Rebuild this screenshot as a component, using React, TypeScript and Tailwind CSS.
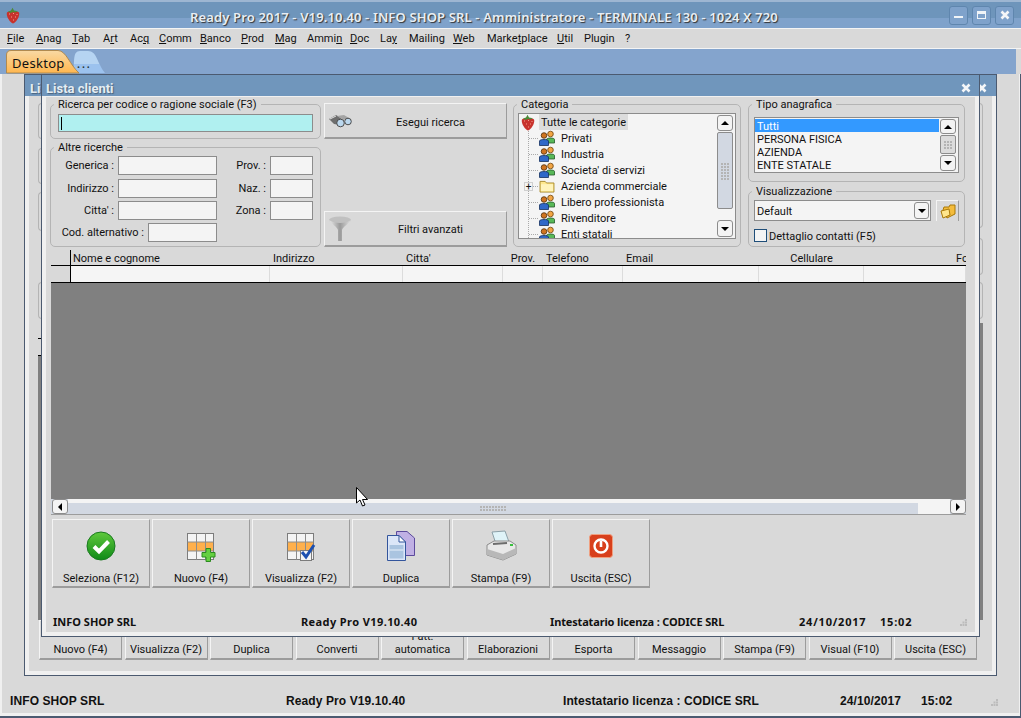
import React from "react";

const Strawberry = ({ className }: { className: string }) => (
  <svg viewBox="0 0 14 17" className={className}>
    <path d="M1 5.500C3 3.500 11 3.500 13 5.500C14.200 9 10.500 15 7 16.600C3.500 15 -.2 9 1 5.500Z" fill="#c8322c" />
    <path d="M3 7h1M7 6.500h1M10.500 7.500h1M5 10h1M9 10h1M7 13h1" stroke="#f2a08c" strokeWidth="1" />
    <path d="M2 4.500L5 3.600L6.500 .8L8 3.400L12 4.200L9 5.600L7 5L4.500 6Z" fill="#4c8a38" />
  </svg>
);

const People = () => (
  <svg viewBox="0 0 16 16" className="h-4 w-4 shrink-0">
    <path d="M7.500 13V9.500C7.500 7.500 15.500 7.500 15.500 9.500V13Z" fill="#58b858" stroke="#23582a" strokeWidth=".8" />
    <circle cx="11.5" cy="4" r="2.8" fill="#f2a544" stroke="#6e4208" strokeWidth=".8" />
    <path d="M.5 15.500V11C.5 9 9.500 9 9.500 11V15.500Z" fill="#2f68c8" stroke="#14305f" strokeWidth=".8" />
    <circle cx="5" cy="5.5" r="2.8" fill="#d07420" stroke="#50300a" strokeWidth=".8" />
  </svg>
);

const FolderIcon = () => (
  <svg viewBox="0 0 16 14" className="h-[13px] w-4 shrink-0">
    <path d="M.5 13V1.500H6L7.500 3.200H15.500V13Z" fill="#ffe98f" stroke="#a8892c" />
    <path d="M1.500 12V4.500H14.500V12Z" fill="#fff4bc" />
  </svg>
);

const Arrow = ({ up = false, left = false, right = false }: { up?: boolean; left?: boolean; right?: boolean }) => (
  <svg viewBox="0 0 8 8" className="h-2 w-2">
    {up && <path d="M0 6H8L4 2Z" fill="#000" />}
    {left && <path d="M6 0V8L2 4Z" fill="#000" />}
    {right && <path d="M2 0V8L6 4Z" fill="#000" />}
    {!up && !left && !right && <path d="M0 2H8L4 6Z" fill="#000" />}
  </svg>
);

const ScrollButton = ({ children, className }: { children: React.ReactNode; className: string }) => (
  <div className={`flex shrink-0 items-center justify-center rounded-[3px] border border-[#8c8c8c] bg-[#f4f4f4] ${className}`}>
    {children}
  </div>
);

const Grip = ({ dots = 9 }: { dots?: number }) => (
  <div className="grid grid-cols-3 gap-px">
    {Array.from({ length: dots }).map((_, i) => (
      <div key={i} className="h-[2px] w-[2px] bg-[#b4b4b4]" />
    ))}
  </div>
);

const ResizeGrip = () => (
  <svg viewBox="0 0 7 7" className="mb-[2px] h-[7px] w-[7px]">
    <path d="M5 0h2v2H5ZM2.500 2.500h2v2h-2ZM5 2.500h2v2H5ZM0 5h2v2H0ZM2.500 5h2v2h-2ZM5 5h2v2H5Z" fill="#bcbcbc" />
  </svg>
);

const GridBase = ({ children }: { children: React.ReactNode }) => (
  <svg viewBox="0 0 32 32" className="h-8 w-8">
    <rect x="2.5" y="3.5" width="26" height="26" fill="#f4f4f4" stroke="#7c7c7c" />
    <rect x="3" y="12" width="25" height="9" fill="#ffb04c" />
    <path d="M11.500 3.500V29.500M20.500 3.500V29.500M2.500 12H28.500M2.500 21H28.500" stroke="#8c8c8c" />
    {children}
  </svg>
);

const icons: Record<string, React.ReactNode> = {
  check: (
    <svg viewBox="0 0 30 30" className="h-[30px] w-[30px]">
      <defs>
        <linearGradient id="g" x1="0" y1="0" x2="0" y2="1">
          <stop offset="0" stopColor="#5fc93c" />
          <stop offset="1" stopColor="#0f8a18" />
        </linearGradient>
      </defs>
      <circle cx="15" cy="15" r="14" fill="url(#g)" stroke="#1a7a20" />
      <path d="M8 15.500L13 20.500L22.500 10.500" fill="none" stroke="#fff" strokeWidth="4" />
    </svg>
  ),
  nuovo: (
    <GridBase>
      <path d="M21 18.500H25.500V22.500H30V27H25.500V31.500H21V27H17V22.500H21Z" fill="#64d040" stroke="#2c8a20" />
    </GridBase>
  ),
  visualizza: (
    <GridBase>
      <rect x="15.5" y="20.5" width="11" height="10" fill="#f4f4f4" stroke="#7c7c7c" />
      <path d="M17 22L21 27L29 15" fill="none" stroke="#1c50b0" strokeWidth="3" />
    </GridBase>
  ),
  duplica: (
    <svg viewBox="0 0 30 32" className="h-8 w-[30px]">
      <path d="M10.500 1.500H21L28.500 8V25.500H10.500Z" fill="#c0b0e4" stroke="#5c4a9c" />
      <path d="M1.500 5.500H13L19.500 12V30.500H1.500Z" fill="#dbe6f8" stroke="#33559c" />
      <path d="M3.500 15H17.500V28.500H3.500Z" fill="#aac4e0" />
      <path d="M3.500 20H17.500" stroke="#e8f0fa" />
      <path d="M13 5.500V12H19.500Z" fill="#fff" stroke="#33559c" />
    </svg>
  ),
  stampa: (
    <svg viewBox="0 0 32 32" className="h-8 w-8">
      <path d="M7 2L20 1L24 12L11 14Z" fill="#dff3f8" stroke="#8ca0a8" />
      <path d="M2 15L9 11H25L31 15V24L18 30L2 25Z" fill="#e8e8e8" stroke="#8c8c8c" />
      <path d="M2 19L18 24L31 18V24L18 30L2 25Z" fill="#b8b8b8" />
      <rect x="25" y="14" width="3" height="2" fill="#3cc040" />
      <path d="M8 14L22 13" stroke="#6c6c6c" strokeWidth="2" />
    </svg>
  ),
  uscita: (
    <svg viewBox="0 0 24 24" className="h-6 w-6">
      <rect x=".5" y=".5" width="23" height="23" rx="3" fill="#d8401c" stroke="#f0a080" />
      <circle cx="12" cy="12" r="6.5" fill="none" stroke="#fff" strokeWidth="2.4" />
      <path d="M12 7V13" stroke="#fff" strokeWidth="2.6" />
    </svg>
  ),
};

const Close = ({ className = "" }: { className?: string }) => (
  <svg viewBox="0 0 10 10" className={`h-[10px] w-[10px] ${className}`}>
    <path d="M1.500 1.500L8.500 8.500M8.500 1.500L1.500 8.500" stroke="#f4f6f8" strokeWidth="2.6" />
  </svg>
);

const Group = ({ title, className, bodyClass = "", children }: { title: string; className: string; bodyClass?: string; children?: React.ReactNode }) => (
  <fieldset className={`rounded-[5px] border border-[#b4b4b4] ${className}`}>
    <legend className="ml-[3px] box-border h-[14px] px-[4px] pt-px leading-[14px]">{title}</legend>
    <div className={bodyClass}>{children}</div>
  </fieldset>
);

const Field = ({ className }: { className: string }) => (
  <div className={`h-[19px] shrink-0 border border-[#8c8c8c] bg-[#f4f4f4] ${className}`} />
);

const Underlined = ({ text, at }: { text: string; at: number }) => (
  <span>
    {text.slice(0, at)}
    <span className="underline">{text.slice(at, at + 1)}</span>
    {text.slice(at + 1)}
  </span>
);

const menu: [string, number, string][] = [
  ["File", 0, "w-[29px]"],
  ["Anag", 0, "w-[36px]"],
  ["Tab", 0, "w-[31px]"],
  ["Art", 1, "w-[27px]"],
  ["Acq", 2, "w-[29px]"],
  ["Comm", 0, "w-[41px]"],
  ["Banco", 0, "w-[41px]"],
  ["Prod", 0, "w-[34px]"],
  ["Mag", 0, "w-[32px]"],
  ["Ammin", 4, "w-[43px]"],
  ["Doc", 0, "w-[30px]"],
  ["Lay", 2, "w-[29px]"],
  ["Mailing", 9, "w-[44px]"],
  ["Web", 0, "w-[34px]"],
  ["Marketplace", 5, "w-[70px]"],
  ["Util", 0, "w-[27px]"],
  ["Plugin", 9, "w-[41px]"],
  ["?", 9, "w-[10px]"],
];

const tree = ["Privati", "Industria", "Societa' di servizi", "Azienda commerciale", "Libero professionista", "Rivenditore", "Enti statali"];

const columns = [
  { name: "Nome e cognome", cls: "w-[199px] pl-[2px]" },
  { name: "Indirizzo", cls: "w-[133px] pl-[3px]" },
  { name: "Citta'", cls: "w-[100px] pl-[3px]" },
  { name: "Prov.", cls: "w-[40px] text-center" },
  { name: "Telefono", cls: "w-[80px] pl-[3px]" },
  { name: "Email", cls: "w-[136px] pl-[3px]" },
  { name: "Cellulare", cls: "w-[105px] text-center" },
  { name: "Fornitore", cls: "w-[102px] pl-[92px]" },
];

const actions = [
  { label: "Seleziona (F12)", icon: "check" },
  { label: "Nuovo (F4)", icon: "nuovo" },
  { label: "Visualizza (F2)", icon: "visualizza" },
  { label: "Duplica", icon: "duplica" },
  { label: "Stampa (F9)", icon: "stampa" },
  { label: "Uscita (ESC)", icon: "uscita" },
];

const backButtons = ["Nuovo (F4)", "Visualizza (F2)", "Duplica", "Converti", "Fatt.\nautomatica", "Elaborazioni", "Esporta", "Messaggio", "Stampa (F9)", "Visual (F10)", "Uscita (ESC)"];

const raised = "border-t border-l border-t-[#f4f4f4] border-l-[#f4f4f4] border-b-2 border-r border-b-[#9c9c9c] border-r-[#9c9c9c]";

const TitleBar = ({ children }: { children: React.ReactNode }) => (
  <div className="flex h-[21px] shrink-0 items-center bg-[#7096bc] pt-[5px] text-[13px] font-bold text-[#e4edf3] [text-shadow:1px_1px_1px_#47627e]">
    {children}
  </div>
);

export default function App() {
  return (
    <div className="relative flex h-[718px] w-[1021px] flex-col overflow-hidden bg-[#d9d9d9] font-['Roboto',sans-serif] text-[11px] leading-[13px] text-[#111]">
      {/* main title */}
      <div className="flex h-[28px] shrink-0 items-center border-t-2 border-[#9db6d2] bg-gradient-to-b from-[#6e95bb] from-60% to-[#7fa2cb] to-60%">
        <Strawberry className="ml-[6px] h-[17px] w-[14px]" />
        <div className="ml-[170px] pt-[5px] font-['Noto_Sans',sans-serif] text-[13px] font-semibold tracking-[0.15px] whitespace-nowrap text-[#e8eef4] [text-shadow:1px_1px_1px_#333]">
          Ready Pro 2017 - V19.10.40 - INFO SHOP SRL - Amministratore - TERMINALE 130 - 1024 X 720
        </div>
        <div className="ml-auto mr-[7px] flex gap-[4px]">
          {["min", "max", "close"].map((b) => (
            <div key={b} className="flex h-[19px] w-[19px] items-center justify-center rounded-[3px] border border-[#5f86ae] bg-[#7fa2cb]">
              {b === "min" && <div className="mt-[4px] h-[2px] w-[9px] bg-[#f0f4f8]" />}
              {b === "max" && <div className="h-[8px] w-[9px] border border-t-[3px] border-[#f0f4f8]" />}
              {b === "close" && <Close />}
            </div>
          ))}
        </div>
      </div>

      {/* menu */}
      <div className="flex h-[21px] shrink-0 items-center border-y border-[#f4f4f4] pl-[7px]">
        {menu.map(([name, at, w]) => (
          <div key={name} className={w}>
            <Underlined text={name} at={at} />
          </div>
        ))}
      </div>

      {/* tabs */}
      <div className="relative mr-[5px] h-[25px] shrink-0 bg-[#84a4cd]">
        <svg viewBox="0 0 110 25" className="absolute left-0 top-0 h-[25px] w-[110px]">
          <defs>
            <linearGradient id="o" x1="0" y1="0" x2="0" y2="1">
              <stop offset="0" stopColor="#f9d9a4" />
              <stop offset="1" stopColor="#ffb74f" />
            </linearGradient>
            <linearGradient id="b" x1="0" y1="0" x2="0" y2="1">
              <stop offset="0" stopColor="#b6d4f2" />
              <stop offset=".6" stopColor="#b6d4f2" />
              <stop offset=".61" stopColor="#9cc2ee" />
              <stop offset="1" stopColor="#9cc2ee" />
            </linearGradient>
          </defs>
          <path d="M73 24C75 14 72 2 80 2H88C97 2 97 14 105 24Z" fill="url(#b)" />
          <path d="M6.500 24V6C6.500 3 8 1.500 11 1.500H58C66 1.500 70 16 79 24Z" fill="url(#o)" stroke="#b08a50" />
        </svg>
        <div className="relative flex h-full items-center pl-[12px] pt-[3px] font-['Noto_Sans',sans-serif] text-[13px] tracking-[0.3px] text-[#111]">
          <span>Desktop</span>
          <span className="ml-[12px] tracking-[1.5px] text-[#233]">...</span>
        </div>
      </div>

      {/* desktop */}
      <div className="relative min-h-0 flex-1 border-x-2 border-[#f0f0f0]">
        {/* back window */}
        <div className="absolute left-[22px] top-0 flex h-[602px] w-[973px] flex-col border border-[#4b5a70] bg-[#d9d9d9]">
          <TitleBar>
            <span className="pl-[5px]">Lista clienti</span>
            <Close className="ml-auto mr-[9px]" />
          </TitleBar>
          <div className="flex min-h-0 flex-1 flex-col border-x-4 border-b-4 border-[#f0f0f0] pl-[9px] pr-[9px]">
            <div className="flex min-h-0 flex-1 justify-between overflow-hidden pt-[7px]">
              <div className="flex w-[4px] flex-col">
                <div className="h-[36px] shrink-0 rounded-l-[5px] border-y border-l border-[#b4b4b4]" />
                <div className="mt-[9px] h-[36px] shrink-0 rounded-l-[5px] border-y border-l border-[#b4b4b4]" />
                <div className="mt-[8px] h-[39px] shrink-0 rounded-l-[5px] border-y border-l border-[#b4b4b4]" />
                <div className="mt-[51px] h-[37px] shrink-0 rounded-l-[5px] border-y border-l border-[#b4b4b4]" />
                <div className="mt-[19px] h-[1px] shrink-0 bg-black" />
                <div className="mt-[16px] min-h-0 flex-1 border-t border-black bg-[#808080]" />
              </div>
              <div className="flex w-[4px] flex-col">
                <div className="h-[125px] shrink-0 rounded-r-[5px] border-y border-r border-[#b4b4b4]" />
                <div className="mt-[10px] h-[37px] shrink-0 rounded-r-[5px] border-y border-r border-[#b4b4b4]" />
                <div className="mt-[7px] h-[37px] shrink-0 rounded-r-[5px] border-y border-r border-[#b4b4b4]" />
                <div className="mt-[4px] min-h-0 flex-1 bg-[#808080]" />
              </div>
            </div>
            <div className="mb-[11px] flex shrink-0 gap-[2.5px] pl-px">
              {backButtons.map((b) => (
                <div key={b} className={`flex h-[40px] w-[83px] shrink-0 items-end justify-center whitespace-pre-line pb-[2px] text-center ${raised}`}>
                  {b}
                </div>
              ))}
            </div>
          </div>
        </div>

        {/* front window */}
        <div className="absolute left-[39px] top-0 flex h-[563px] w-[939px] flex-col border border-[#4b5a70] bg-[#d9d9d9]">
          <TitleBar>
            <span className="pl-[4px]">Lista clienti</span>
            <Close className="ml-auto mr-[8px]" />
          </TitleBar>
          <div className="flex min-h-0 flex-1 flex-col border-x-4 border-b-4 border-t border-[#f0f0f0]">
            {/* filters */}
            <div className="flex h-[153px] shrink-0 pl-[4px]">
              <div className="flex w-[271px] shrink-0 flex-col gap-[1px]">
                <Group title="Ricerca per codice o ragione sociale (F3)" className="h-[42px]" bodyClass="px-[7px]">
                  <div className="mt-[3px] flex h-[18px] items-center border border-[#8c8c8c] bg-[#b0f0f0] pl-[2px]">
                    <div className="h-[13px] w-px bg-black" />
                  </div>
                </Group>
                <Group title="Altre ricerche" className="h-[107px]" bodyClass="flex flex-col pt-[2px]">
                  <div className="flex items-center">
                    <div className="w-[67px] pr-[4px] text-right">Generica :</div>
                    <Field className="w-[99px]" />
                    <div className="w-[53px] pr-[4px] text-right">Prov. :</div>
                    <Field className="w-[43px]" />
                  </div>
                  <div className="mt-[4px] flex items-center">
                    <div className="w-[67px] pr-[4px] text-right">Indirizzo :</div>
                    <Field className="w-[99px]" />
                    <div className="w-[53px] pr-[4px] text-right">Naz. :</div>
                    <Field className="w-[43px]" />
                  </div>
                  <div className="mt-[3px] flex items-center">
                    <div className="w-[67px] pr-[4px] text-right">Citta' :</div>
                    <Field className="w-[99px]" />
                    <div className="w-[53px] pr-[4px] text-right">Zona :</div>
                    <Field className="w-[43px]" />
                  </div>
                  <div className="mt-[3px] flex items-center">
                    <div className="w-[97px] pr-[4px] text-right">Cod. alternativo :</div>
                    <Field className="w-[69px]" />
                  </div>
                </Group>
              </div>

              <div className="ml-[3px] flex h-[150px] w-[183px] shrink-0 flex-col justify-between pt-[6px]">
                <div className={`flex h-[36px] items-center pl-[3px] ${raised}`}>
                  <svg viewBox="0 0 24 14" className="h-[14px] w-[24px]">
                    <path d="M1 5L8 1L13 4L12 11L6 10Z" fill="#6e6e6e" />
                    <path d="M9 2L16 1L21 4L15 6Z" fill="#a4a4a4" />
                    <path d="M2 5L8 2" stroke="#e4e4e4" />
                    <circle cx="12.5" cy="9" r="3.8" fill="#bcd8ee" stroke="#4c4c4c" />
                    <circle cx="20" cy="7.5" r="3.3" fill="#bcd8ee" stroke="#4c4c4c" />
                  </svg>
                  <span className="flex-1 pl-[3px] pt-[4px] text-center">Esegui ricerca</span>
                </div>
                <div className={`flex h-[36px] items-center pl-[3px] ${raised}`}>
                  <svg viewBox="0 0 24 26" className="h-[26px] w-[24px]">
                    <defs>
                      <linearGradient id="f" x1="0" y1="0" x2="1" y2="0">
                        <stop offset="0" stopColor="#ececec" />
                        <stop offset=".5" stopColor="#9a9a9a" />
                        <stop offset="1" stopColor="#e0e0e0" />
                      </linearGradient>
                    </defs>
                    <ellipse cx="12" cy="4" rx="11" ry="3.5" fill="#c0c0c0" />
                    <path d="M1 4C4 8 9 11 10 14V25H14V14C15 11 20 8 23 4C18 8 6 8 1 4Z" fill="url(#f)" />
                  </svg>
                  <span className="flex-1 pl-[3px] pt-[2px] text-center">Filtri avanzati</span>
                </div>
              </div>

              <Group title="Categoria" className="ml-[6px] h-[150px] w-[228px] shrink-0" bodyClass="px-[4px]">
                <div className="mt-[2px] flex h-[126px] w-[218px] overflow-hidden border border-[#8c8c8c] bg-[#f4f4f4]">
                  <div className="relative min-w-0 flex-1">
                    <div className="absolute bottom-0 left-[9px] top-[17px] border-l border-dotted border-[#aaa]" />
                    <div className="flex h-[16px] items-center pl-[2px]">
                      <Strawberry className="h-[17px] w-[14px] shrink-0" />
                      <span className="ml-[4px] flex h-[16px] items-center bg-[#dcdcdc] px-[2px]">Tutte le categorie</span>
                    </div>
                    {tree.map((t, i) => (
                      <div key={t} className="relative flex h-[16px] items-center pl-[20px]">
                        <div className="absolute left-[10px] top-[8px] w-[9px] border-t border-dotted border-[#aaa]" />
                        {i === 3 ? (
                          <>
                            <div className="absolute left-[5px] top-[4px] flex h-[9px] w-[9px] items-center justify-center border border-[#cfcfcf] bg-[#f4f4f4] text-[10px] leading-[7px]">+</div>
                            <FolderIcon />
                          </>
                        ) : (
                          <People />
                        )}
                        <span className="ml-[6px] whitespace-nowrap">{t}</span>
                      </div>
                    ))}
                  </div>
                  <div className="flex w-[19px] shrink-0 flex-col items-center py-px pr-px">
                    <ScrollButton className="h-[16px] w-[16px]"><Arrow up /></ScrollButton>
                    <div className="my-px flex w-[16px] flex-1 items-end justify-center rounded-[2px] border border-[#8c8c8c] bg-[#d2d8e2] pb-[28px]">
                      <Grip dots={18} />
                    </div>
                    <ScrollButton className="mt-[10px] h-[17px] w-[16px]"><Arrow /></ScrollButton>
                  </div>
                </div>
              </Group>

              <div className="ml-[7px] flex w-[217px] shrink-0 flex-col gap-[2px]">
                <Group title="Tipo anagrafica" className="h-[85px]" bodyClass="px-[5px]">
                  <div className="mt-[6px] flex h-[56px] w-[205px] border border-[#8c8c8c] bg-[#f4f4f4]">
                    <div className="flex min-w-0 flex-1 flex-col pt-px">
                      <div className="h-[13px] bg-[#3399ff] pl-[2px] pt-px text-white">Tutti</div>
                      <div className="h-[13px] pl-[2px] pt-px">PERSONA FISICA</div>
                      <div className="h-[13px] pl-[2px] pt-px">AZIENDA</div>
                      <div className="h-[13px] pl-[2px] pt-px">ENTE STATALE</div>
                    </div>
                    <div className="flex w-[19px] shrink-0 flex-col items-center py-px pr-px">
                      <ScrollButton className="h-[15px] w-[16px]"><Arrow up /></ScrollButton>
                      <div className="my-px flex w-[16px] flex-1 items-center justify-center rounded-[2px] border border-[#8c8c8c] bg-[#dcdcdc]">
                        <Grip />
                      </div>
                      <ScrollButton className="h-[16px] w-[16px]"><Arrow /></ScrollButton>
                    </div>
                  </div>
                </Group>
                <Group title="Visualizzazione" className="h-[63px]" bodyClass="px-[5px]">
                  <div className="mt-[2px] flex h-[21px] items-stretch">
                    <div className="flex w-[177px] items-center border border-[#8c8c8c] bg-[#f4f4f4] pl-[2px] pr-px">
                      <span className="flex-1 pt-px">Default</span>
                      <ScrollButton className="h-[17px] w-[15px]"><Arrow /></ScrollButton>
                    </div>
                    <div className="ml-[5px] flex w-[23px] items-center justify-center border-l border-r border-t border-l-[#f4f4f4] border-r-[#9c9c9c] border-t-[#f4f4f4]">
                      <svg viewBox="0 0 16 15" className="h-[15px] w-4">
                        <path d="M3 6L4 3H9L10 1H15V10L7 14Z" fill="#f4bc3c" stroke="#a87808" />
                        <path d="M1 7L9 5L10 11L3 14Z" fill="#ffe68c" stroke="#a87808" />
                      </svg>
                    </div>
                  </div>
                  <div className="mt-[7px] flex items-center">
                    <div className="h-[13px] w-[13px] border border-[#1f4e79] bg-[#f4f4f4]" />
                    <span className="ml-[2px] pt-[2px]">Dettaglio contatti (F5)</span>
                  </div>
                </Group>
              </div>
            </div>

            {/* grid */}
            <div className="ml-[5px] mr-[9px] flex flex-col">
              <div className="flex h-[16px] overflow-hidden border-b border-black">
                <div className="w-[20px] shrink-0 border-r border-black" />
                {columns.map((c) => (
                  <div key={c.name} className={`shrink-0 whitespace-nowrap pt-[2px] ${c.cls}`}>{c.name}</div>
                ))}
              </div>
              <div className="flex h-[17px] overflow-hidden border-b border-black">
                <div className="w-[20px] shrink-0 border-r border-black" />
                {columns.map((c) => (
                  <div key={c.name} className={`shrink-0 border-r border-[#dcdcdc] bg-[#f5f5f5] ${c.cls}`} />
                ))}
              </div>
              <div className="h-[216px] bg-[#808080]" />
              <div className="flex h-[16px] border-b border-[#9c9c9c] bg-[#d2d8e2]">
                <ScrollButton className="ml-px h-[15px] w-[16px]"><Arrow left /></ScrollButton>
                <div className="flex flex-1 items-center justify-center border-t-4 border-[#f4f4f4]">
                  <div className="grid grid-cols-9 gap-px">
                    {Array.from({ length: 18 }).map((_, i) => (
                      <div key={i} className="h-[2px] w-[2px] bg-[#b4b4b4]" />
                    ))}
                  </div>
                </div>
                <div className="w-[32px] shrink-0 bg-[#f4f4f4]" />
                <ScrollButton className="h-[15px] w-[16px]"><Arrow right /></ScrollButton>
              </div>
            </div>

            {/* actions */}
            <div className="mt-[4px] flex gap-[2px] pl-[6px]">
              {actions.map((a) => (
                <div key={a.label} className={`flex h-[69px] w-[98px] shrink-0 flex-col items-center ${raised}`}>
                  <div className="flex h-[48px] items-center pt-[4px]">{icons[a.icon]}</div>
                  <div className="pt-[4px]">{a.label}</div>
                </div>
              ))}
            </div>

            {/* status */}
            <div className="mt-auto flex h-[24px] items-end pb-[4px] pl-[7px] font-['Noto_Sans',sans-serif] font-bold">
              <div className="w-[248px]">INFO SHOP SRL</div>
              <div className="w-[249px] tracking-[0.4px]">Ready Pro V19.10.40</div>
              <div className="w-[249px] tracking-[-0.15px]">Intestatario licenza : CODICE SRL</div>
              <div className="w-[81px] tracking-[0.8px]">24/10/2017</div>
              <div className="w-[80px] tracking-[0.8px]">15:02</div>
              <ResizeGrip />
            </div>
          </div>
        </div>
      </div>

      {/* outer status */}
      <div className="absolute bottom-0 left-0 flex h-[26px] w-full items-end border-b-[5px] border-[#f0f0f0] pb-[5px] pl-[10px] font-['Liberation_Sans',sans-serif] text-[12px] font-bold tracking-[0.1px]">
        <div className="w-[276px]">INFO SHOP SRL</div>
        <div className="w-[277px]">Ready Pro V19.10.40</div>
        <div className="w-[277px]">Intestatario licenza : CODICE SRL</div>
        <div className="w-[81px]">24/10/2017</div>
        <div className="w-[70px]">15:02</div>
        <ResizeGrip />
      </div>
      <div className="absolute bottom-0 left-0 h-[2px] w-full bg-[#4b5a70]" />
      <div className="absolute bottom-0 right-0 top-[74px] w-px bg-[#4b5a70]" />

      {/* mouse pointer */}
      <svg viewBox="0 0 13 20" className="absolute left-[356px] top-[487px] h-[20px] w-[13px]">
        <path d="M.5 .5V16L4 13L6.500 19L9 18L6.500 12.500H11.500Z" fill="#fff" stroke="#000" />
      </svg>
    </div>
  );
}
